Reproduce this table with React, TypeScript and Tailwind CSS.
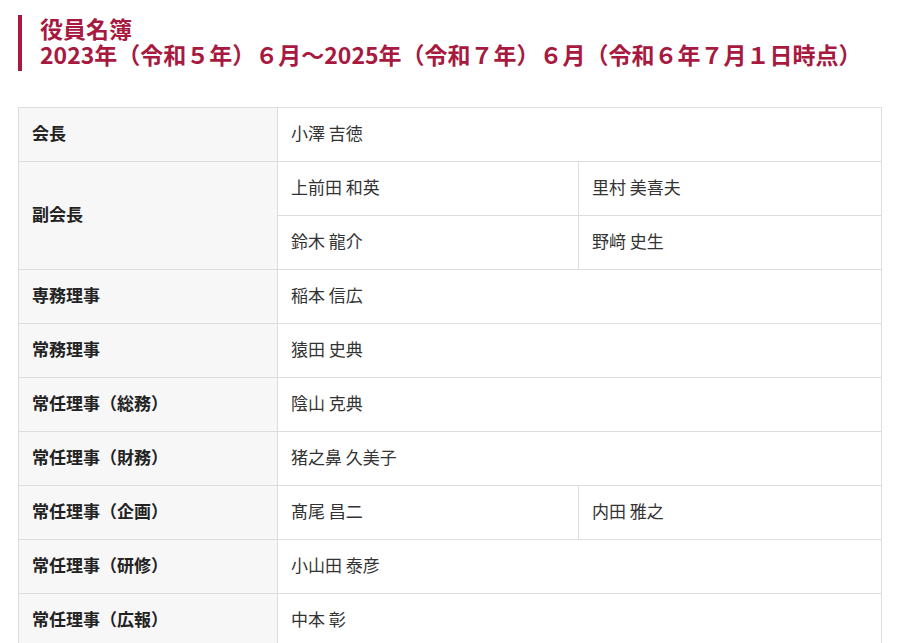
import React from "react";

type Row = { label: string; values: string[][] };

const rows: Row[] = [
  { label: "会長", values: [["小澤 吉徳"]] },
  { label: "副会長", values: [["上前田 和英", "里村 美喜夫"], ["鈴木 龍介", "野﨑 史生"]] },
  { label: "専務理事", values: [["稲本 信広"]] },
  { label: "常務理事", values: [["猿田 史典"]] },
  { label: "常任理事（総務）", values: [["陰山 克典"]] },
  { label: "常任理事（財務）", values: [["猪之鼻 久美子"]] },
  { label: "常任理事（企画）", values: [["髙尾 昌二", "内田 雅之"]] },
  { label: "常任理事（研修）", values: [["小山田 泰彦"]] },
  { label: "常任理事（広報）", values: [["中本 彰"]] },
];

const font = { fontFamily: '"Noto Sans CJK JP", "Noto Sans", sans-serif' };

export default function App() {
  return (
    <div className="w-[899px] h-[643px] overflow-hidden bg-white" style={font}>
      <div className="ml-[18px] mt-[15px] border-l-4 border-[#a8193f] pl-[18px] pb-[4px] text-[23px] leading-[26px] font-bold text-[#a8193f]">
        <div>役員名簿</div>
        <div className="whitespace-nowrap">2023年（令和５年）６月～2025年（令和７年）６月（令和６年７月１日時点）</div>
      </div>
      <table className="ml-[18px] mt-[36px] w-[863px] table-fixed border-collapse text-[17px] leading-[24px]">
        <colgroup>
          <col className="w-[259px]" />
          <col className="w-[301px]" />
          <col className="w-[303px]" />
        </colgroup>
        <tbody>
          {rows.map((r) =>
            r.values.map((line, i) => (
              <tr key={r.label + i} className="h-[54px]">
                {i === 0 && (
                  <th
                    rowSpan={r.values.length}
                    className="border border-[#dddddd] bg-[#f7f7f7] px-[13px] pb-[3px] text-left align-middle font-bold text-[#222222]"
                  >
                    {r.label}
                  </th>
                )}
                {line.length === 1 ? (
                  <td colSpan={2} className="border border-[#dddddd] px-[13px] pb-[3px] align-middle text-[#333333]">
                    {line[0]}
                  </td>
                ) : (
                  line.map((v) => (
                    <td key={v} className="border border-[#dddddd] px-[13px] pb-[3px] align-middle text-[#333333]">
                      {v}
                    </td>
                  ))
                )}
              </tr>
            ))
          )}
        </tbody>
      </table>
    </div>
  );
}
